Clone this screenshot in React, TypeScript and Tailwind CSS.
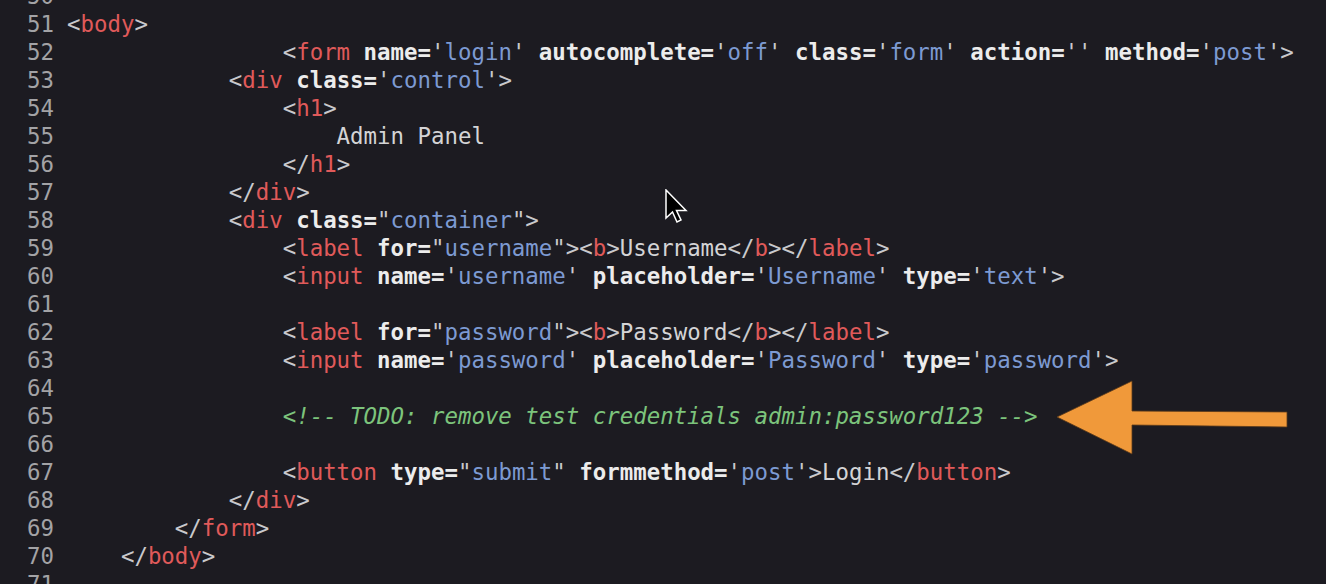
import React from "react";

type Tok = [string, string];

const cls: Record<string, string> = {
  p: "text-[#c9c9cc]",
  t: "text-[#e05a5a]",
  a: "text-[#ececec] font-bold",
  s: "text-[#7d9ad2]",
  x: "text-[#d4d4d6]",
  c: "text-[#7cc47c] italic",
};

const sp = (n: number): Tok => [" ".repeat(n), "x"];

const lines: [number, Tok[]][] = [
  [50, []],
  [51, [["<", "p"], ["body", "t"], [">", "p"]]],
  [
    52,
    [
      sp(16),
      ["<", "p"],
      ["form", "t"],
      [" ", "x"],
      ["name=", "a"],
      ["'", "p"],
      ["login", "s"],
      ["'", "p"],
      [" ", "x"],
      ["autocomplete=", "a"],
      ["'", "p"],
      ["off", "s"],
      ["'", "p"],
      [" ", "x"],
      ["class=", "a"],
      ["'", "p"],
      ["form", "s"],
      ["'", "p"],
      [" ", "x"],
      ["action=", "a"],
      ["''", "p"],
      [" ", "x"],
      ["method=", "a"],
      ["'", "p"],
      ["post", "s"],
      ["'>", "p"],
    ],
  ],
  [
    53,
    [sp(12), ["<", "p"], ["div", "t"], [" ", "x"], ["class=", "a"], ["'", "p"], ["control", "s"], ["'>", "p"]],
  ],
  [54, [sp(16), ["<", "p"], ["h1", "t"], [">", "p"]]],
  [55, [sp(20), ["Admin Panel", "x"]]],
  [56, [sp(16), ["</", "p"], ["h1", "t"], [">", "p"]]],
  [57, [sp(12), ["</", "p"], ["div", "t"], [">", "p"]]],
  [
    58,
    [sp(12), ["<", "p"], ["div", "t"], [" ", "x"], ["class=", "a"], ["\"", "p"], ["container", "s"], ["\">", "p"]],
  ],
  [
    59,
    [
      sp(16),
      ["<", "p"],
      ["label", "t"],
      [" ", "x"],
      ["for=", "a"],
      ["\"", "p"],
      ["username", "s"],
      ["\"><", "p"],
      ["b", "t"],
      [">", "p"],
      ["Username", "x"],
      ["</", "p"],
      ["b", "t"],
      ["></", "p"],
      ["label", "t"],
      [">", "p"],
    ],
  ],
  [
    60,
    [
      sp(16),
      ["<", "p"],
      ["input", "t"],
      [" ", "x"],
      ["name=", "a"],
      ["'", "p"],
      ["username", "s"],
      ["'", "p"],
      [" ", "x"],
      ["placeholder=", "a"],
      ["'", "p"],
      ["Username", "s"],
      ["'", "p"],
      [" ", "x"],
      ["type=", "a"],
      ["'", "p"],
      ["text", "s"],
      ["'>", "p"],
    ],
  ],
  [61, []],
  [
    62,
    [
      sp(16),
      ["<", "p"],
      ["label", "t"],
      [" ", "x"],
      ["for=", "a"],
      ["\"", "p"],
      ["password", "s"],
      ["\"><", "p"],
      ["b", "t"],
      [">", "p"],
      ["Password", "x"],
      ["</", "p"],
      ["b", "t"],
      ["></", "p"],
      ["label", "t"],
      [">", "p"],
    ],
  ],
  [
    63,
    [
      sp(16),
      ["<", "p"],
      ["input", "t"],
      [" ", "x"],
      ["name=", "a"],
      ["'", "p"],
      ["password", "s"],
      ["'", "p"],
      [" ", "x"],
      ["placeholder=", "a"],
      ["'", "p"],
      ["Password", "s"],
      ["'", "p"],
      [" ", "x"],
      ["type=", "a"],
      ["'", "p"],
      ["password", "s"],
      ["'>", "p"],
    ],
  ],
  [64, []],
  [65, [sp(16), ["<!-- TODO: remove test credentials admin:password123 -->", "c"]]],
  [66, []],
  [
    67,
    [
      sp(16),
      ["<", "p"],
      ["button", "t"],
      [" ", "x"],
      ["type=", "a"],
      ["\"", "p"],
      ["submit", "s"],
      ["\"", "p"],
      [" ", "x"],
      ["formmethod=", "a"],
      ["'", "p"],
      ["post", "s"],
      ["'>", "p"],
      ["Login", "x"],
      ["</", "p"],
      ["button", "t"],
      [">", "p"],
    ],
  ],
  [68, [sp(12), ["</", "p"], ["div", "t"], [">", "p"]]],
  [69, [sp(8), ["</", "p"], ["form", "t"], [">", "p"]]],
  [70, [sp(4), ["</", "p"], ["body", "t"], [">", "p"]]],
  [71, []],
];

export default function App() {
  return (
    <div className="relative w-[1326px] h-[584px] overflow-hidden bg-[#1c1b21]">
      <div
        className="flex flex-col mt-[-18px] text-[22.4px] leading-[28px]"
        style={{ fontFamily: '"DejaVu Sans Mono", "Liberation Mono", monospace' }}
      >
        {lines.map(([n, toks]) => (
          <div key={n} className="flex h-[28px]">
            <div className="w-[54px] text-right text-[#a3a3a6] shrink-0">{n}</div>
            <div className="ml-[13px] whitespace-pre">
              {toks.map((t, i) => (
                <span key={i} className={cls[t[1]]}>
                  {t[0]}
                </span>
              ))}
            </div>
          </div>
        ))}
      </div>

      {/* orange arrow */}
      <svg className="absolute left-0 top-0" width="1326" height="584" viewBox="0 0 1326 584">
        <polygon
          points="1057,417 1132,381 1132,411 1287,412 1287,427 1132,425 1132,454"
          fill="#f0993a"
          stroke="#5a3a1a"
          strokeWidth="0.8"
          strokeLinejoin="miter"
        />
      </svg>

      {/* mouse cursor */}
      <svg className="absolute left-[664px] top-[189px]" width="28" height="40" viewBox="0 0 28 40">
        <path
          d="M2 1 L2 29 L8.5 23 L13 33 L17 31 L12.5 21.5 L22 21.5 Z"
          fill="#000"
          stroke="#fff"
          strokeWidth="1.5"
          strokeLinejoin="miter"
        />
      </svg>
    </div>
  );
}
